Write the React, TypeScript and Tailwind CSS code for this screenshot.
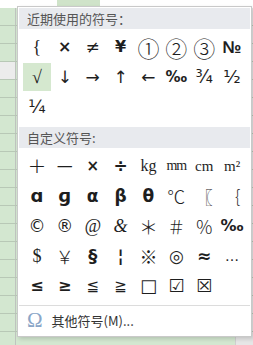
import React from "react";

const recent = ["{", "×", "≠", "¥", "①", "②", "③", "№", "√", "↓", "→", "↑", "←", "‰", "¾", "½", "¼"];

const custom: { s: string; cls?: string }[] = [
  { s: "+", cls: "text-[22px] font-light" },
  { s: "—", cls: "text-[16px]" },
  { s: "×", cls: "text-[15px] font-bold" },
  { s: "÷", cls: "text-[17px] font-bold" },
  { s: "kg", cls: "font-['Liberation_Serif',serif] text-[16px]" },
  { s: "mm", cls: "font-['Liberation_Serif',serif] text-[14px] tracking-[-1px]" },
  { s: "cm", cls: "font-['Liberation_Serif',serif] text-[15px]" },
  { s: "m²", cls: "font-['Liberation_Serif',serif] text-[15px]" },
  { s: "ɑ", cls: "font-bold text-[18px]" },
  { s: "ɡ", cls: "font-bold text-[18px]" },
  { s: "α", cls: "font-bold text-[17px]" },
  { s: "β", cls: "font-bold text-[17px]" },
  { s: "θ", cls: "font-bold text-[17px]" },
  { s: "℃", cls: "text-[18px] font-light font-['Noto_Sans_CJK_SC',sans-serif]" },
  { s: "〖", cls: "text-[17px] font-light font-['Noto_Sans_CJK_SC',sans-serif]" },
  { s: "｛", cls: "text-[17px] font-light font-['Noto_Sans_CJK_SC',sans-serif]" },
  { s: "©", cls: "text-[17px]" },
  { s: "®", cls: "text-[17px]" },
  { s: "@", cls: "font-['Liberation_Serif',serif] italic text-[18px]" },
  { s: "&", cls: "font-['Liberation_Serif',serif] italic text-[18px]" },
  { s: "＊", cls: "text-[19px] font-light font-['Noto_Sans_CJK_SC',sans-serif]" },
  { s: "＃", cls: "text-[18px] font-light font-['Noto_Sans_CJK_SC',sans-serif]" },
  { s: "％", cls: "text-[18px] font-light font-['Noto_Sans_CJK_SC',sans-serif]" },
  { s: "‰", cls: "text-[16px] font-bold" },
  { s: "$", cls: "font-['Liberation_Serif',serif] text-[18px]" },
  { s: "￥", cls: "text-[18px] font-light font-['Noto_Sans_CJK_SC',sans-serif]" },
  { s: "§", cls: "font-bold text-[18px]" },
  { s: "¦", cls: "font-bold text-[17px]" },
  { s: "※", cls: "text-[18px] font-light font-['Noto_Sans_CJK_SC',sans-serif]" },
  { s: "◎", cls: "text-[17px]" },
  { s: "≈", cls: "font-bold text-[17px]" },
  { s: "…", cls: "text-[14px]" },
  { s: "≤", cls: "font-bold text-[16px]" },
  { s: "≥", cls: "font-bold text-[16px]" },
  { s: "≦", cls: "text-[15px]" },
  { s: "≧", cls: "text-[15px]" },
  { s: "□", cls: "text-[18px]" },
  { s: "☑", cls: "text-[18px]" },
  { s: "☒", cls: "text-[18px]" },
];

function Cell({ s, cls, active }: { s: string; cls?: string; active?: boolean }) {
  return (
    <div className="h-[30px] flex items-center justify-center">
      <div
        className={[
          "w-[28px] h-[28px] flex items-center justify-center text-[#1e1e1e] leading-none",
          active ? "bg-[#d5e8cf]" : "",
          cls ?? "text-[17px]",
        ].join(" ")}
      >
        {s}
      </div>
    </div>
  );
}

function recentClass(s: string) {
  if (["①", "②", "③"].includes(s)) return "text-[22px] font-light font-['Noto_Sans_CJK_SC',sans-serif]";
  if (s === "№") return "text-[17px] font-bold font-['Liberation_Sans',sans-serif]";
  if (s === "√") return "text-[18px] font-['Liberation_Serif',serif]";
  if (s === "{") return "text-[18px] font-light font-['Liberation_Serif',serif]";
  if (["¾", "½", "¼"].includes(s)) return "text-[18px]";
  if (s === "‰") return "text-[15px] font-bold";
  if (s === "¥" || s === "×") return "text-[16px] font-bold";
  return undefined;
}

export default function App() {
  const rows = Array.from({ length: 19 });
  return (
    <div className="relative w-[253px] h-[345px] overflow-hidden bg-white font-['Noto_Sans_CJK_SC','Noto_Sans',sans-serif]">
      {/* 表格背景 */}
      <div className="flex h-[8px]">
        <div className="w-[16px] bg-white" />
        <div className="w-[41px]" />
        <div className="w-[43px] bg-[#cfe3c9]" />
      </div>
      <div className="flex flex-col">
        {rows.map((_, i) => (
          <div key={i} className="flex h-[18px] border-b border-[#b8c8b6]">
            <div
              className={[
                "w-[16px] border-r border-[#bfc4bf]",
                i === 3 ? "bg-[#ececec]" : "bg-[#d3e7d0]",
              ].join(" ")}
            />
            <div className="flex-1 bg-[#d3e7d0]" />
            <div className="w-[18px] bg-[#e6e6e6] border-l border-[#cfcfcf]" />
          </div>
        ))}
      </div>

      {/* 符号弹出框 */}
      <div className="absolute left-[17px] top-[6px] w-[235px] h-[331px] bg-white border border-[#c9c9c9] shadow-[2px_2px_4px_rgba(0,0,0,0.15)] flex flex-col pt-[1px] px-[1px]">
        <div className="h-[21px] bg-[#e8eaee] flex items-center pl-[8px] text-[13px] text-[#555] leading-none">
          近期使用的符号：
        </div>
        <div className="grid grid-cols-8 px-[4px] pt-[3px] font-['DejaVu_Sans',sans-serif]">
          {recent.map((s, i) => (
            <Cell key={i} s={s} active={s === "√"} cls={recentClass(s)} />
          ))}
        </div>
        <div className="h-[21px] mt-[5px] bg-[#e8eaee] flex items-center pl-[8px] text-[13px] text-[#555] leading-none">
          自定义符号:
        </div>
        <div className="grid grid-cols-8 px-[4px] pt-[3px] font-['DejaVu_Sans',sans-serif]">
          {custom.map((c, i) => (
            <Cell key={i} s={c.s} cls={c.cls} />
          ))}
        </div>
        <div className="mt-[4px] border-t border-[#dcdcdc] h-[30px] flex items-center pl-[8px] gap-[9px]">
          <span className="text-[#8aa6c8] text-[21px] leading-none font-['Liberation_Serif',serif]">
            Ω
          </span>
          <span className="text-[13px] text-[#333]">其他符号(M)...</span>
        </div>
      </div>
    </div>
  );
}
